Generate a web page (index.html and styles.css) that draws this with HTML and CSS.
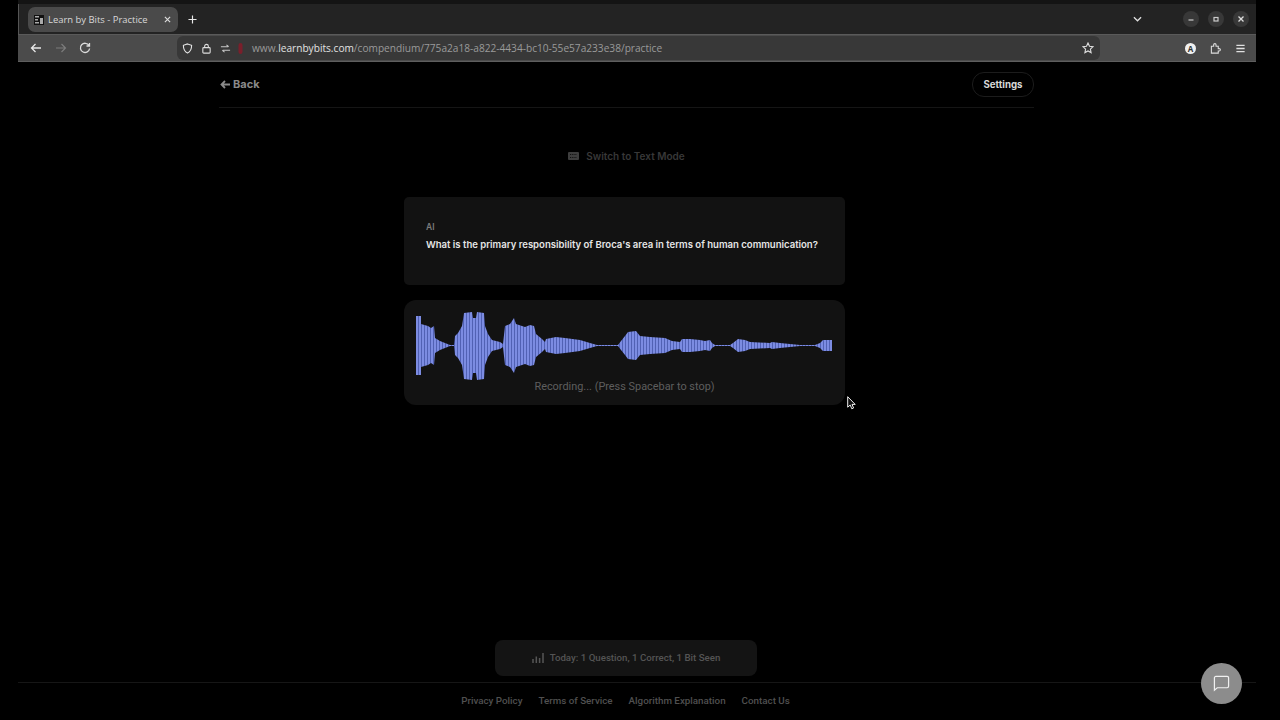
FILE: index.html
```html
<!DOCTYPE html>
<html lang="en">
<head>
<meta charset="utf-8">
<title>Learn by Bits - Practice</title>
<link rel="stylesheet" href="styles.css">
</head>
<body>
<div class="frame">
  <header class="chrome">
    <div class="strip"></div>
    <div class="tabbar">
      <div class="tab">
        <svg class="favicon" viewBox="0 0 10 10"><rect width="10" height="10" fill="#111"/><path d="M1 1h4v1.5H1zM1 4h3v1.5H1zM1 7h4v1.5H1zM6 3h3v6H6z" fill="#aaa"/></svg>
        <span class="tab-title">Learn by Bits - Practice</span>
        <svg class="tab-close" viewBox="0 0 8 8"><path d="M1 1l6 6M7 1L1 7" stroke="#ddd" stroke-width="1.3"/></svg>
      </div>
      <svg class="new-tab" viewBox="0 0 10 10"><path d="M5 .5v9M.5 5h9" stroke="#e8e8e8" stroke-width="1.3"/></svg>
      <div class="tabbar-right">
        <svg class="tab-list" viewBox="0 0 10 6"><path d="M1 1l4 4 4-4" fill="none" stroke="#e0e0e0" stroke-width="1.4"/></svg>
        <div class="win-btns">
          <span class="win-btn"><svg viewBox="0 0 8 8"><path d="M1.5 5h5" stroke="#ccc" stroke-width="1.2"/></svg></span>
          <span class="win-btn"><svg viewBox="0 0 8 8"><rect x="2" y="2.5" width="4" height="3.5" fill="none" stroke="#ccc" stroke-width="1.2"/></svg></span>
          <span class="win-btn"><svg viewBox="0 0 8 8"><path d="M1.5 1.5l5 5M6.5 1.5l-5 5" stroke="#ddd" stroke-width="1.3"/></svg></span>
        </div>
      </div>
    </div>
    <div class="toolbar">
      <div class="nav-btns">
        <svg class="nav-icon" viewBox="0 0 12 12"><path d="M11 6H1.500M5.500 2L1.500 6l4 4" fill="none" stroke="#e8e8e8" stroke-width="1.300"/></svg>
        <svg class="nav-icon" viewBox="0 0 12 12"><path d="M1 6h9.500M6.500 2l4 4-4 4" fill="none" stroke="#7c7c7c" stroke-width="1.200"/></svg>
        <svg class="nav-icon" viewBox="0 0 12 12"><path d="M10 3.500A4.600 4.600 0 1 0 10.600 6.500M10.500 1v3H7.500" fill="none" stroke="#dcdcdc" stroke-width="1.300"/></svg>
      </div>
      <div class="urlbar">
        <svg class="url-icon" viewBox="0 0 12 12"><path d="M6 1l4.500 1.500c0 4-1.300 7-4.500 8.500C2.800 9.500 1.500 6.500 1.500 2.500z" fill="none" stroke="#e4e4e4" stroke-width="1.200"/></svg>
        <svg class="url-icon" viewBox="0 0 12 12"><rect x="2" y="5" width="8" height="6" rx="1" fill="none" stroke="#ddd" stroke-width="1.200"/><path d="M4 5V3.500a2 2 0 0 1 4 0V5" fill="none" stroke="#ddd" stroke-width="1.200"/></svg>
        <svg class="url-icon" viewBox="0 0 12 12"><path d="M1 4h8M7 2l2.500 2M11 8H3M5 10L2.500 8" fill="none" stroke="#c8c8c8" stroke-width="1.100"/></svg>
        <svg class="mic-dot" viewBox="0 0 5 11"><rect x=".5" y="0" width="4" height="11" rx="2" fill="#7a1f2b"/></svg>
        <span class="url"><span class="url-dim">www.</span><span class="url-host">learnbybits.com</span><span class="url-dim">/compendium/775a2a18-a822-4434-bc10-55e57a233e38/practice</span></span>
        <svg class="star" viewBox="0 0 12 12"><path d="M6 1l1.500 3.300 3.500.4-2.600 2.400.7 3.500L6 8.900l-3.100 1.700.7-3.500L1 4.700l3.500-.4z" fill="none" stroke="#ddd" stroke-width="1.100"/></svg>
      </div>
      <div class="tool-right">
        <span class="avatar">A</span>
        <svg class="tool-icon" viewBox="0 0 12 12"><path d="M1.500 3.500h2.500V2a1.300 1.300 0 0 1 2.600 0v1.500H9v2.600h1a1.300 1.300 0 0 1 0 2.600H9V11H1.500z" fill="none" stroke="#ddd" stroke-width="1.200"/></svg>
        <svg class="tool-icon" viewBox="0 0 12 12"><path d="M1.500 2.500h9M1.500 6h9M1.500 9.500h9" stroke="#e0e0e0" stroke-width="1.400"/></svg>
      </div>
    </div>
  </header>

  <main class="page">
    <div class="topbar">
      <a class="back"><svg class="back-arrow" viewBox="0 0 10 9"><path d="M10 4.500H1.500M5 1L1.500 4.500 5 8" fill="none" stroke="#8a8a8a" stroke-width="1.800"/></svg>Back</a>
      <button class="settings">Settings</button>
    </div>
    <div class="switch-row">
      <svg class="kbd" viewBox="0 0 11 8"><rect width="11" height="8" rx="1" fill="#3e3e3e"/><path d="M2 2.500h7M2 5.500h7" stroke="#111" stroke-width="1" stroke-dasharray="1 .8"/></svg>
      <span>Switch to Text Mode</span>
    </div>
    <section class="card question">
      <div class="speaker">AI</div>
      <p class="question-text">What is the primary responsibility of Broca's area in terms of human communication?</p>
    </section>
    <section class="card recorder">
      <svg class="wave" viewBox="416 312 416 68" width="416" height="68">
        <defs>
          <pattern id="bars" x="416" y="0" width="3" height="10" patternUnits="userSpaceOnUse">
            <rect width="3" height="10" fill="#5161b4"/>
            <rect width="2" height="10" fill="#7c8ce2"/>
          </pattern>
        </defs>
        <polygon fill="url(#bars)" points="416,316 421,316 421,324 428,326 431,328 434,326 435,338 440,341 445,343 450,345 454,345 455,336 458,333 462,326 464,313 472,312 473,318 476,318 477,312 484,313 485,326 488,334 492,340 500,342 503,344 505,326 510,324 514,318 516,324 525,327 530,325 534,326 536,334 542,339 545,342 546,339 556,337 565,338 580,340 590,343 597,345 618,345 621,341 625,336 628,332 636,331 640,336 650,337 665,338 672,341 680,342 682,339 690,339 700,340 705,341 710,340 712,343 715,345 730,345 733,343 738,339 745,340 750,342 770,343 772,342 780,343 790,344 800,345 815,345 820,343 823,340 832,340 832,351 823,351 820,348 815,346 800,346 790,347 780,348 772,349 770,348 750,349 745,351 738,352 733,348 730,346 715,346 712,348 710,351 705,350 700,351 690,352 682,352 680,349 672,350 665,353 650,354 640,355 636,360 628,359 625,355 621,350 618,346 597,346 590,348 580,351 565,353 556,354 546,352 545,349 542,352 536,357 534,365 530,366 525,364 516,367 514,373 510,367 505,365 503,347 500,349 492,351 488,357 485,365 484,379 477,380 476,373 473,373 472,380 464,379 462,365 458,358 455,355 454,346 450,346 445,348 440,350 435,353 434,365 431,363 428,365 421,367 421,375 416,375"/>
      </svg>
      <div class="rec-label">Recording... (Press Spacebar to stop)</div>
    </section>
    <div class="stats-row">
      <div class="stats">
        <svg class="stats-icon" viewBox="0 0 12 11"><path d="M1 7v4M4.300 4.500V11M7.600 6v5M11 1v10" stroke="#555" stroke-width="1.500"/></svg>
        <span>Today: 1 Question, 1 Correct, 1 Bit Seen</span>
      </div>
    </div>
  </main>

  <footer class="footer">
    <a>Privacy Policy</a>
    <a>Terms of Service</a>
    <a>Algorithm Explanation</a>
    <a>Contact Us</a>
  </footer>
  <button class="chat" aria-label="Chat">
    <svg viewBox="0 0 18 18"><path d="M1.500 16V3a1.500 1.500 0 0 1 1.500-1.500h12A1.500 1.500 0 0 1 16.500 3v9a1.500 1.500 0 0 1-1.500 1.500H4.500z" fill="none" stroke="#f0f0f0" stroke-width="1.300"/></svg>
  </button>
  <svg class="cursor" viewBox="0 0 9 14"><path d="M.7.7v10.500l2.500-2.200 1.600 3.800 1.800-.8-1.600-3.600h3.200z" fill="#111" stroke="#eee" stroke-width="1"/></svg>
</div>
</body>
</html>
```

FILE: styles.css
```css
* { box-sizing: border-box; }
html, body { margin: 0; height: 100%; background: #000; overflow: hidden; }
body { font-family: Roboto, "Liberation Sans", sans-serif; }
a { text-decoration: none; color: inherit; }
svg { display: block; flex: none; }

.frame { position: relative; margin-left: 18px; width: 1238px; height: 720px; display: flex; flex-direction: column; background: #000; }

.chrome { height: 62px; flex: none; display: flex; flex-direction: column; font-family: "Open Sans", "Noto Sans", sans-serif; }
.strip { height: 4px; background: #141414; }
.tabbar { height: 30px; background: #232323; display: flex; align-items: center; padding-left: 9px; border-left: 1px solid #555; }
.tab { width: 150px; height: 25px; margin-top: 1px; background: #4a4a4a; border-radius: 7px; display: flex; align-items: center; padding: 0 7px 0 6px; color: #d8d8d8; font-size: 9.450px; }
.favicon { width: 10px; height: 10px; }
.tab-title { margin-left: 4px; flex: 1; white-space: nowrap; }
.tab-close { width: 7px; height: 7px; }
.new-tab { width: 9px; height: 9px; margin-left: 10px; }
.tabbar-right { margin-left: auto; display: flex; align-items: center; padding-right: 7px; }
.tab-list { width: 9px; height: 6px; margin-right: 41px; }
.win-btns { display: flex; gap: 9px; }
.win-btn { width: 16px; height: 16px; border-radius: 50%; background: #383838; display: flex; align-items: center; justify-content: center; }
.win-btn svg { width: 8px; height: 8px; }

.toolbar { height: 28px; background: #4b4b4b; border-top: 1px solid #5a5a5a; border-bottom: 1px solid #5e5e5e; display: flex; align-items: center; }
.nav-btns { display: flex; gap: 12.500px; padding-left: 12px; width: 159px; }
.nav-icon { width: 12px; height: 12px; }
.urlbar { width: 923px; height: 24px; background: #383838; border-radius: 6px; display: flex; align-items: center; padding: 0 6px 0 5px; }
.url-icon { width: 11px; height: 11px; margin-right: 8px; }
.mic-dot { width: 5px; height: 11px; margin-right: 9px; margin-left: -1px; }
.url { font-size: 10.130px; white-space: nowrap; flex: 1; }
.url-dim { color: #9a9a9a; }
.url-host { color: #e2e2e2; }
.star { width: 12px; height: 12px; }
.tool-right { display: flex; align-items: center; gap: 14px; padding-left: 85px; }
.avatar { width: 11px; height: 11px; border-radius: 50%; background: #f0f0f0; color: #333; font-size: 8px; font-weight: 700; display: flex; align-items: center; justify-content: center; }
.tool-icon { width: 11px; height: 11px; }

.page { flex: 1; min-height: 0; display: flex; flex-direction: column; margin-left: 201px; width: 815px; font-family: Inter, Roboto, sans-serif; }
.topbar { height: 46px; flex: none; border-bottom: 1px solid #151515; display: flex; align-items: center; justify-content: space-between; padding-bottom: 1px; }
.back { color: #8a8a8a; font-size: 11px; font-weight: 700; margin-left: 1px; display: flex; align-items: center; gap: 3px; }
.back-arrow { width: 10px; height: 9px; }
.settings { height: 25px; width: 62px; border-radius: 12px; border: 1px solid #1c1c1c; background: #000; color: #d8d8d8; font: 700 9.700px Inter, Roboto, sans-serif; padding: 0; }
.switch-row { margin-top: 42px; height: 12px; display: flex; align-items: center; justify-content: center; gap: 7px; color: #383838; font-size: 10px; font-weight: 600; }
.kbd { width: 11px; height: 8px; }
.card { width: 441px; margin-left: 185px; background: #121212; border-radius: 5px; flex: none; }
.question { height: 88px; margin-top: 35px; padding: 25px 22px 0; }
.speaker { color: #7a7a7a; font-size: 8.500px; font-weight: 600; line-height: 10px; }
.question-text { margin: 7px 0 0; color: #e6e6e6; font-size: 9.550px; font-weight: 600; line-height: 11px; white-space: nowrap; }
.recorder { height: 105px; margin-top: 15px; border-radius: 12px; padding: 12px 12px 0; display: flex; flex-direction: column; }
.wave { width: 416px; height: 68px; }
.rec-label { margin-top: 0; text-align: center; color: #5e5e5e; font: 400 10.900px Roboto, sans-serif; line-height: 13px; }
.stats-row { margin-top: auto; margin-bottom: 6px; display: flex; }
.stats { width: 262px; height: 36px; margin-left: 276px; padding-bottom: 2px; background: #141414; border-radius: 8px; display: flex; align-items: center; justify-content: center; gap: 6px; color: #545454; font: 500 9.700px Roboto, sans-serif; }
.stats-icon { width: 12px; height: 11px; }

.footer { height: 38px; flex: none; border-top: 1px solid #161616; display: flex; align-items: center; justify-content: center; gap: 16px; padding: 0 23px 3px 0; color: #505050; font: 500 9.800px Roboto, sans-serif; }
.chat { position: absolute; left: 1183px; top: 663px; width: 41px; height: 41px; border-radius: 50%; border: 0; background: #8c8c8c; padding: 0; display: flex; align-items: center; justify-content: center; }
.chat svg { width: 17px; height: 17px; }
.cursor { position: absolute; left: 829px; top: 396px; width: 9px; height: 14px; }
```
